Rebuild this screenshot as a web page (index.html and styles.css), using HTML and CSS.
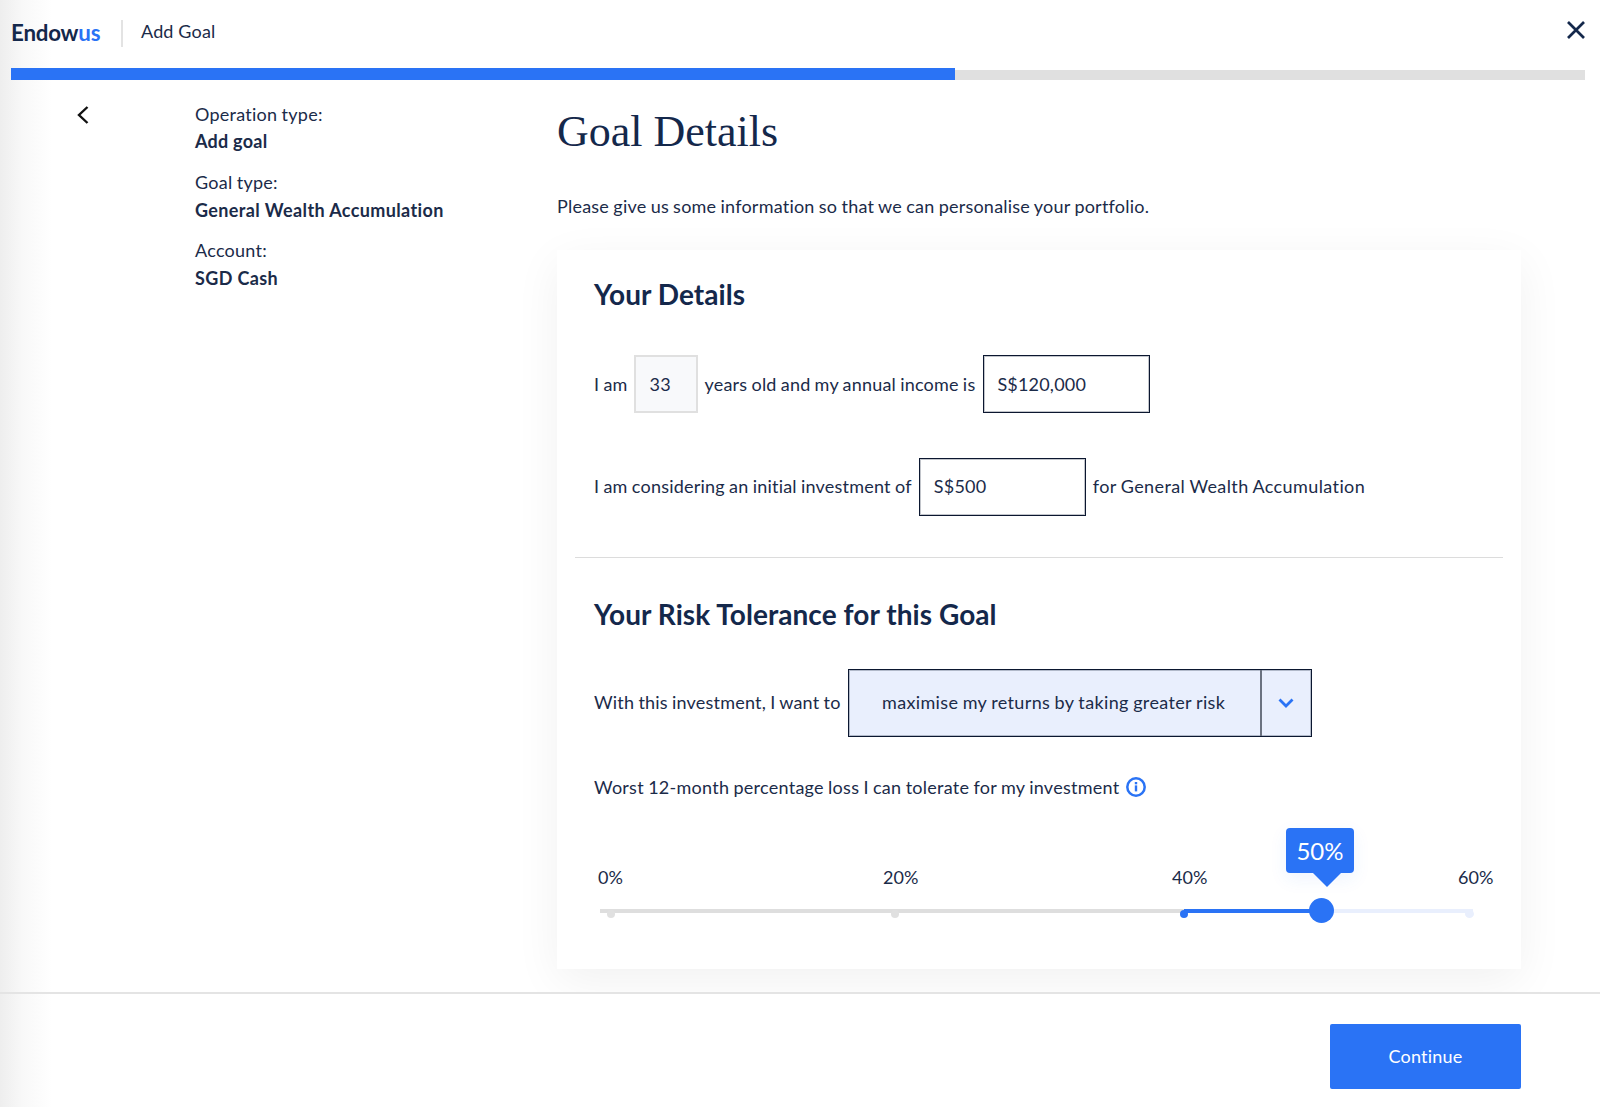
FILE: index.html
```html
<!DOCTYPE html>
<html lang="en">
<head>
<meta charset="utf-8">
<title>Add Goal</title>
<link rel="stylesheet" href="styles.css">
</head>
<body>
<div class="page">
  <header class="topbar">
    <div class="logo">Endow<span class="logo-us">us</span></div>
    <div class="top-title">Add Goal</div>
    <svg class="close" width="18" height="18" viewBox="0 0 18 18"><path d="M1 1L17 17M17 1L1 17" fill="none" stroke="#14284b" stroke-width="2.7"/></svg>
  </header>
  <div class="progress"><div class="progress-fill"></div></div>
  <main class="main">
    <div class="back">
      <svg width="12" height="18" viewBox="0 0 12 18"><path d="M10.5 1L2 9l8.5 8" fill="none" stroke="#111" stroke-width="2.4"/></svg>
    </div>
    <aside class="summary">
      <div class="sum-item"><div>Operation type:</div><strong>Add goal</strong></div>
      <div class="sum-item"><div>Goal type:</div><strong>General Wealth Accumulation</strong></div>
      <div class="sum-item"><div>Account:</div><strong>SGD Cash</strong></div>
    </aside>
    <section class="content">
      <h1 class="title">Goal Details</h1>
      <p class="intro">Please give us some information so that we can personalise your portfolio.</p>
      <div class="card">
        <div class="block block-details">
          <h2 class="heading">Your Details</h2>
          <div class="row row-one">
            <span>I am</span>
            <span class="field field-age">33</span>
            <span>years old and my annual income is</span>
            <span class="field field-income">S$120,000</span>
          </div>
          <div class="row row-two">
            <span class="considering">I am considering an initial investment of</span>
            <span class="field">S$500</span>
            <span class="for-goal">for General Wealth Accumulation</span>
          </div>
        </div>
        <hr class="rule">
        <div class="block block-risk">
          <h2 class="heading">Your Risk Tolerance for this Goal</h2>
          <div class="row row-select">
            <span class="select-label">With this investment, I want to</span>
            <div class="select">
              <span class="select-value">maximise my returns by taking greater risk</span>
              <span class="select-arrow">
                <svg width="16" height="10" viewBox="0 0 16 10"><path d="M1.5 1.5L8 8l6.5-6.5" fill="none" stroke="#2a73f5" stroke-width="2.8"/></svg>
              </span>
            </div>
          </div>
          <div class="worst">
            <span>Worst 12-month percentage loss I can tolerate for my investment</span>
            <svg class="info" width="20" height="20" viewBox="0 0 20 20"><circle cx="10" cy="10" r="8.7" fill="none" stroke="#2a73f5" stroke-width="2.5"/><rect x="8.8" y="8.4" width="2.4" height="6" fill="#2a73f5"/><rect x="8.8" y="5" width="2.4" height="2.3" fill="#2a73f5"/></svg>
          </div>
          <div class="slider">
            <div class="labels">
              <span>0%</span><span>20%</span><span>40%</span><span>60%</span>
            </div>
            <div class="track">
              <div class="seg seg-grey"></div>
              <div class="seg seg-blue"></div>
              <div class="seg seg-light"></div>
              <span class="dot dot-0"></span>
              <span class="dot dot-20"></span>
              <span class="dot dot-40"></span>
              <span class="dot dot-60"></span>
              <span class="thumb"></span>
              <div class="tip">50%</div>
            </div>
          </div>
        </div>
      </div>
    </section>
  </main>
  <footer class="footer"><button class="continue">Continue</button></footer>
</div>
</body>
</html>
```
FILE: styles.css
```css
* { box-sizing: border-box; }
html, body { margin: 0; padding: 0; }
body {
  font-family: Lato, "Liberation Sans", sans-serif;
  font-size: 18px;
  color: #1b2b49;
  background: #fff;
  font-variant-ligatures: none;
}
.page {
  width: 1600px;
  height: 1107px;
  overflow: hidden;
  display: flex;
  flex-direction: column;
  background: linear-gradient(to right, #eeeeee 0, #f8f8f8 22px, #ffffff 52px);
}
.topbar {
  height: 68px;
  flex: none;
  display: flex;
  align-items: center;
  padding: 0 15px 4px 11px;
}
.logo {
  font-family: Lato, sans-serif;
  font-weight: 700;
  font-size: 22.3px;
  color: #14284b;
  letter-spacing: -0.2px;
  width: 112px;
  height: 27px;
  line-height: 25px;
  margin-top: 2px;
  border-right: 2px solid #e3e3e3;
}
.logo-us { color: #2a73f5; }
.top-title { margin-left: 18px; line-height: 27px; margin-top: -2px; letter-spacing: 0.15px; }
.close { margin-left: auto; margin-top: -4px; }
.progress {
  flex: none;
  width: 1574px;
  height: 12px;
  margin-left: 11px;
  background: linear-gradient(#fff 2px, #e0e0e0 2px);
}
.progress-fill { width: 944px; height: 12px; background: #2a73f5; }
.main {
  flex: 1;
  min-height: 0;
  display: flex;
  overflow: hidden;
}
.back { width: 195px; flex: none; padding: 26px 0 0 77px; }
.back svg { display: block; }
.summary { width: 362px; flex: none; padding-top: 21px; line-height: 27px; letter-spacing: 0.25px; word-spacing: -0.6px; }
.sum-item { margin-bottom: 14px; }
.sum-item strong { display: block; font-weight: 700; letter-spacing: 0.38px; word-spacing: 0; padding-top: 1px; margin-bottom: -1px; }
.sum-item:first-child strong { padding-top: 0; margin-bottom: 0; letter-spacing: 0.25px; }
.content { width: 964px; flex: none; padding-bottom: 40px; }
.title {
  margin: 0;
  padding-top: 29px;
  font-family: "Liberation Serif", serif;
  font-weight: 400;
  font-size: 44px;
  line-height: 46px;
  color: #14284b;
}
.intro { margin: 38px 0 0; line-height: 27px; letter-spacing: 0.22px; word-spacing: -0.6px; }
.card {
  margin-top: 30px;
  background: #fff;
  height: 719px;
  box-shadow: 0 12px 44px rgba(0, 0, 0, 0.06);
  padding: 0 18px;
}
.block { padding: 0 19px; letter-spacing: 0.24px; word-spacing: -0.6px; }
.heading {
  margin: 0 0 1px;
  font-size: 28px;
  font-weight: 700;
  line-height: 34px;
  color: #14284b;
  letter-spacing: 0.06px;
  word-spacing: 0;
  position: relative;
  top: -1px;
}
.block-details { padding-top: 28px; }
.row { display: flex; align-items: center; gap: 7px; }
.row-one { margin-top: 43px; letter-spacing: 0.19px; }
.row-two { margin-top: 45px; }
.row-two > span { padding-bottom: 2px; }
.considering { letter-spacing: 0.21px; }
.for-goal { letter-spacing: 0.4px; }
.field {
  width: 167px;
  height: 58px;
  border: 1px solid #0b1730;
  box-shadow: inset 0 0 0 1px rgba(11, 23, 48, 0.25);
  padding-left: 14px;
  display: flex;
  align-items: center;
  background: #fff;
}
.field-age {
  width: 64px;
  margin-left: -1px;
  background: #f8f9fb;
  border: 2px solid #e0e0e0;
  box-shadow: none;
}
.field-income { margin-left: 1px; padding-left: 13px; }
.rule { border: 0; border-top: 1px solid #dcdcdc; margin: 41px 0 0; }
.block-risk { padding-top: 40px; }
.row-select { margin-top: 37px; }
.select-label { padding-bottom: 3px; letter-spacing: 0.2px; }
.select {
  width: 464px;
  height: 68px;
  display: flex;
  border: 1px solid #0b1730;
  box-shadow: inset 0 0 0 1px rgba(11, 23, 48, 0.25);
  background: #e9effd;
}
.select-value { flex: 1; display: flex; align-items: center; justify-content: center; padding: 0 1px 3px 0; letter-spacing: 0.36px; }
.select-arrow {
  width: 51px;
  flex: none;
  border-left: 2px solid #6b7280;
  display: flex;
  align-items: center;
  justify-content: center;
}
.worst { margin-top: 37px; display: flex; align-items: center; gap: 7px; line-height: 27px; letter-spacing: 0.26px; }
.info { margin-top: -2px; }
.slider { margin-top: 63px; padding-left: 4px; }
.labels { display: grid; grid-template-columns: 285px 289px 286px auto; line-height: 27px; letter-spacing: 0; word-spacing: 0; }
.track {
  position: relative;
  height: 4px;
  margin-top: 18px;
  margin-left: 2px;
  width: 873px;
  display: flex;
}
.seg { height: 4px; }
.seg-grey { width: 584px; background: #dedede; }
.seg-blue { width: 137px; background: #2a73f5; }
.seg-light { flex: 1; background: #e9effd; }
.dot { position: absolute; top: 0; width: 8px; height: 8px; border-radius: 50%; margin-top: 1px; }
.dot-0 { left: 7px; background: #e0e0e0; }
.dot-20 { left: 291px; background: #e0e0e0; }
.dot-40 { left: 580px; background: #2a73f5; }
.dot-60 { left: 865px; background: #e9effd; width: 9px; }
.thumb {
  position: absolute;
  left: 709px;
  top: -11px;
  width: 25px;
  height: 25px;
  border-radius: 50%;
  background: #2a73f5;
}
.tip {
  position: absolute;
  left: 686px;
  top: -81px;
  width: 68px;
  height: 45px;
  border-radius: 4px;
  background: #2a73f5;
  color: #fff;
  font-size: 24px;
  line-height: 45px;
  letter-spacing: 0;
  text-align: center;
  box-shadow: 0 6px 18px rgba(42, 115, 245, 0.08);
}
.tip::after {
  content: "";
  position: absolute;
  left: 27px;
  top: 45px;
  border-left: 14px solid transparent;
  border-right: 14px solid transparent;
  border-top: 14px solid #2a73f5;
}
.footer {
  flex: none;
  height: 115px;
  position: relative;
  border-top: 2px solid #e4e4e4;
  background: linear-gradient(to right, #eeeeee 0, #f8f8f8 22px, #ffffff 52px);
  display: flex;
  justify-content: flex-end;
  padding: 30px 79px 0 0;
}
.continue {
  width: 191px;
  height: 65px;
  border: 0;
  border-radius: 2px;
  background: #2a73f5;
  color: #fff;
  font-family: inherit;
  font-size: 18px;
  letter-spacing: 0.2px;
  padding: 0 0 2px;
}
```
